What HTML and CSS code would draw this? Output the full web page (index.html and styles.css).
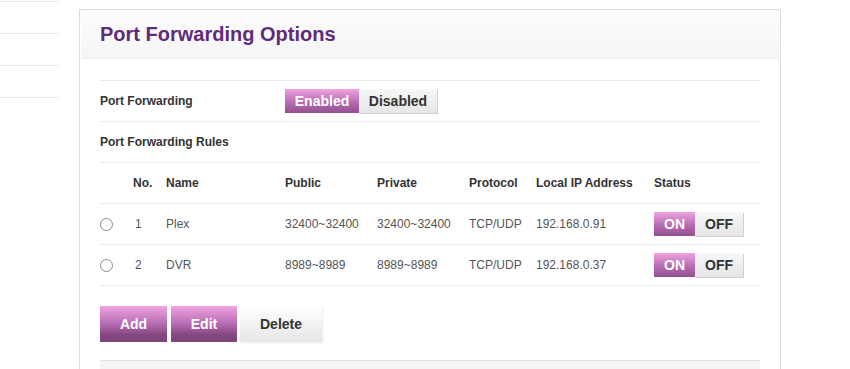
FILE: index.html
```html
<!DOCTYPE html>
<html lang="en">
<head>
    <meta charset="UTF-8">
    <title>Port Forwarding Options</title>
    <link rel="stylesheet" href="styles.css">
</head>
<body>
    <div class="page">
        <ul class="side-menu">
            <li></li>
            <li></li>
            <li></li>
            <li></li>
        </ul>
        <div class="panel">
            <div class="panel-header">
                <h1>Port Forwarding Options</h1>
            </div>
            <div class="panel-body">
                <div class="form-row">
                    <div class="form-label">Port Forwarding</div>
                    <div class="switch">
                        <span class="switch-item active">Enabled</span>
                        <span class="switch-item">Disabled</span>
                    </div>
                </div>
                <div class="form-row">
                    <div class="form-label">Port Forwarding Rules</div>
                </div>
                <table class="rules">
                    <thead>
                        <tr>
                            <th></th>
                            <th>No.</th>
                            <th>Name</th>
                            <th>Public</th>
                            <th>Private</th>
                            <th>Protocol</th>
                            <th>Local IP Address</th>
                            <th>Status</th>
                        </tr>
                    </thead>
                    <tbody>
                        <tr>
                            <td><span class="radio"></span></td>
                            <td>1</td>
                            <td>Plex</td>
                            <td>32400~32400</td>
                            <td>32400~32400</td>
                            <td>TCP/UDP</td>
                            <td>192.168.0.91</td>
                            <td>
                                <div class="switch small">
                                    <span class="switch-item active">ON</span>
                                    <span class="switch-item">OFF</span>
                                </div>
                            </td>
                        </tr>
                        <tr>
                            <td><span class="radio"></span></td>
                            <td>2</td>
                            <td>DVR</td>
                            <td>8989~8989</td>
                            <td>8989~8989</td>
                            <td>TCP/UDP</td>
                            <td>192.168.0.37</td>
                            <td>
                                <div class="switch small">
                                    <span class="switch-item active">ON</span>
                                    <span class="switch-item">OFF</span>
                                </div>
                            </td>
                        </tr>
                    </tbody>
                </table>
                <div class="actions">
                    <button class="btn btn-primary btn-add">Add</button>
                    <button class="btn btn-primary btn-edit">Edit</button>
                    <button class="btn btn-default">Delete</button>
                </div>
                <div class="panel-footer"></div>
            </div>
        </div>
    </div>
</body>
</html>
```

FILE: styles.css
```css
body {
    font-family: "Liberation Sans", Arial, sans-serif;
    color: #333;
    background-color: #fff;
    margin: 0;
    padding: 0;
    overflow: hidden;
}
.page {
    display: flex;
    align-items: flex-start;
}
.side-menu {
    list-style: none;
    width: 59px;
    margin: -30px 20px 0 0;
    padding: 0;
}
.side-menu li {
    height: 31px;
    border-bottom: 1px solid #e8e8e8;
}
.panel {
    width: 698px;
    margin-top: 9px;
    padding: 1px 1px 0;
    border: 1px solid #dcdcdc;
    border-bottom: none;
}
.panel-header {
    height: 47px;
    border-bottom: 1px solid #ececec;
    background: linear-gradient(to bottom, #fdfdfd, #f5f5f5);
    padding-left: 19px;
}
h1 {
    margin: 0;
    font-size: 20px;
    font-weight: bold;
    line-height: 47px;
    color: #5f2b7d;
}
.panel-body {
    padding: 21px 19px 0;
}
.form-row {
    display: flex;
    align-items: center;
    height: 40px;
    border-top: 1px solid #ebebeb;
}
.form-label {
    width: 185px;
    font-size: 12px;
    font-weight: bold;
    color: #333;
}
.switch {
    display: flex;
    height: 24px;
}
.switch-item {
    display: flex;
    align-items: center;
    justify-content: center;
    font-size: 14px;
    font-weight: bold;
    color: #333;
    background: linear-gradient(to bottom, #f7f7f7, #e6e6e6);
    box-shadow: 1px 1px 0 #cfcfcf;
}
.switch .switch-item:first-child { width: 74px; }
.switch .switch-item:last-child { width: 78px; }
.switch-item.active {
    color: #fff;
    background: linear-gradient(to bottom, #f1a3e2, #b66cb2 55%, #92508f);
    box-shadow: none;
}
.switch.small .switch-item:first-child { width: 41px; }
.switch.small .switch-item:last-child { width: 48px; }
table.rules {
    width: 100%;
    border-collapse: collapse;
    table-layout: fixed;
    font-size: 12px;
}
.rules th, .rules td {
    height: 40px;
    padding: 0;
    text-align: left;
    border-top: 1px solid #ebebeb;
    border-bottom: 1px solid #ebebeb;
    color: #555;
    white-space: nowrap;
}
.rules th {
    font-weight: bold;
    color: #333;
}
.rules th:nth-child(1) { width: 33px; }
.rules th:nth-child(2) { width: 33px; }
.rules th:nth-child(3) { width: 119px; }
.rules th:nth-child(4) { width: 92px; }
.rules th:nth-child(5) { width: 92px; }
.rules th:nth-child(6) { width: 67px; }
.rules th:nth-child(7) { width: 118px; }
.rules td:nth-child(2) { padding-left: 2px; }
.radio {
    display: block;
    width: 11px;
    height: 11px;
    border: 1px solid #8a8a8a;
    border-radius: 50%;
    background: #fff;
}
.actions {
    display: flex;
    gap: 4px;
    margin-top: 20px;
}
.btn {
    height: 36px;
    border: none;
    padding: 0;
    font-family: inherit;
    font-size: 14px;
    font-weight: bold;
    cursor: pointer;
}
.btn-primary {
    color: #fff;
    background: linear-gradient(to bottom, #f1a3e2, #b66cb2 50%, #834780 80%, #7f447d);
}
.btn-add { width: 67px; }
.btn-edit { width: 66px; margin-right: -1px; }
.btn-default {
    width: 82px;
    color: #333;
    background: linear-gradient(to bottom, #ffffff, #e6e6e6);
    box-shadow: 1px 1px 2px rgba(0,0,0,0.08);
}
.panel-footer {
    margin-top: 18px;
    height: 8px;
    border-top: 1px solid #e2e2e2;
    background-color: #f4f4f4;
}
```
